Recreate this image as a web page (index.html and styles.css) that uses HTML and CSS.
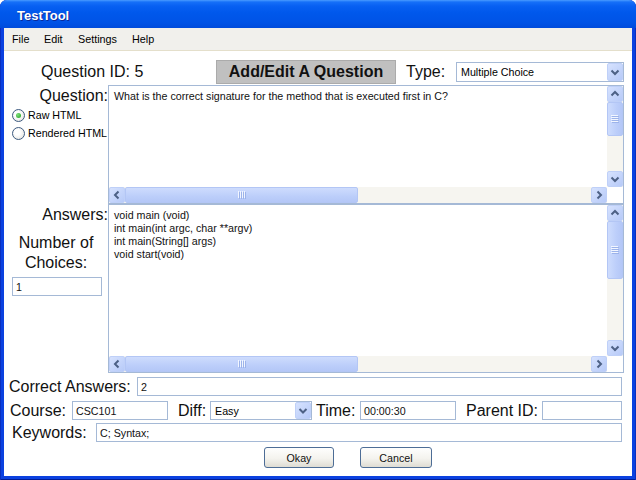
FILE: index.html
```html
<!DOCTYPE html>
<html>
<head>
<meta charset="utf-8">
<title>TestTool</title>
<link rel="stylesheet" href="styles.css">
</head>
<body>
<div class="window">
  <div class="titlebar"><span class="title">TestTool</span></div>
  <div class="frame">
    <div class="menubar">
      <span class="menu m-file">File</span>
      <span class="menu m-edit">Edit</span>
      <span class="menu m-settings">Settings</span>
      <span class="menu m-help">Help</span>
    </div>
    <div class="content">
      <div class="header">
        <div class="lbl qid">Question ID: 5</div>
        <div class="heading">Add/Edit A Question</div>
        <div class="lbl type-lbl">Type:</div>
        <div class="select type-select">
          <span class="val">Multiple Choice</span>
          <span class="dd"><svg width="14" height="16" viewBox="0 0 14 16"><path d="M3.5 6.5 L7 10 L10.5 6.5" fill="none" stroke="#4d6185" stroke-width="2"/></svg></span>
        </div>
      </div>

      <div class="main">
        <div class="side side-q">
          <div class="lbl side-lbl">Question:</div>
          <div class="radio"><span class="dot on"></span>Raw HTML</div>
          <div class="radio"><span class="dot"></span>Rendered HTML</div>
        </div>
        <div class="area area-q">
          <div class="text">What is the correct signature for the method that is executed first in C?</div>
          <div class="vscroll">
            <div class="sbtn"><svg width="14" height="14" viewBox="0 0 14 14"><path d="M3.5 8.5 L7 5 L10.5 8.5" fill="none" stroke="#4d6185" stroke-width="2"/></svg></div>
            <div class="vthumb q-vthumb"><svg width="8" height="8" viewBox="0 0 8 8"><path d="M0 0.5H7M0 2.5H7M0 4.5H7M0 6.5H7" stroke="#f2f6ff"/><path d="M1 1.5H8M1 3.5H8M1 5.5H8M1 7.5H8" stroke="#9cb3ea"/></svg></div>
            <div class="track"></div>
            <div class="sbtn"><svg width="14" height="14" viewBox="0 0 14 14"><path d="M3.5 5.5 L7 9 L10.5 5.5" fill="none" stroke="#4d6185" stroke-width="2"/></svg></div>
          </div>
          <div class="hscroll">
            <div class="sbtn"><svg width="14" height="14" viewBox="0 0 14 14"><path d="M8.5 3.5 L5 7 L8.5 10.5" fill="none" stroke="#4d6185" stroke-width="2"/></svg></div>
            <div class="hthumb"><svg width="8" height="8" viewBox="0 0 8 8"><path d="M0.5 0V7M2.5 0V7M4.5 0V7M6.5 0V7" stroke="#f2f6ff"/><path d="M1.5 1V8M3.5 1V8M5.5 1V8M7.5 1V8" stroke="#9cb3ea"/></svg></div>
            <div class="track"></div>
            <div class="sbtn"><svg width="14" height="14" viewBox="0 0 14 14"><path d="M5.5 3.5 L9 7 L5.5 10.5" fill="none" stroke="#4d6185" stroke-width="2"/></svg></div>
          </div>
          <div class="corner"></div>
        </div>

        <div class="side side-a">
          <div class="lbl side-lbl">Answers:</div>
          <div class="lbl choices">Number of<br>Choices:</div>
          <div class="field num">1</div>
        </div>
        <div class="area area-a">
          <div class="text">void main (void)<br>int main(int argc, char **argv)<br>int main(String[] args)<br>void start(void)</div>
          <div class="vscroll">
            <div class="sbtn"><svg width="14" height="14" viewBox="0 0 14 14"><path d="M3.5 8.5 L7 5 L10.5 8.5" fill="none" stroke="#4d6185" stroke-width="2"/></svg></div>
            <div class="vthumb a-vthumb"><svg width="8" height="8" viewBox="0 0 8 8"><path d="M0 0.5H7M0 2.5H7M0 4.5H7M0 6.5H7" stroke="#f2f6ff"/><path d="M1 1.5H8M1 3.5H8M1 5.5H8M1 7.5H8" stroke="#9cb3ea"/></svg></div>
            <div class="track"></div>
            <div class="sbtn"><svg width="14" height="14" viewBox="0 0 14 14"><path d="M3.5 5.5 L7 9 L10.5 5.5" fill="none" stroke="#4d6185" stroke-width="2"/></svg></div>
          </div>
          <div class="hscroll">
            <div class="sbtn"><svg width="14" height="14" viewBox="0 0 14 14"><path d="M8.5 3.5 L5 7 L8.5 10.5" fill="none" stroke="#4d6185" stroke-width="2"/></svg></div>
            <div class="hthumb"><svg width="8" height="8" viewBox="0 0 8 8"><path d="M0.5 0V7M2.5 0V7M4.5 0V7M6.5 0V7" stroke="#f2f6ff"/><path d="M1.5 1V8M3.5 1V8M5.5 1V8M7.5 1V8" stroke="#9cb3ea"/></svg></div>
            <div class="track"></div>
            <div class="sbtn"><svg width="14" height="14" viewBox="0 0 14 14"><path d="M5.5 3.5 L9 7 L5.5 10.5" fill="none" stroke="#4d6185" stroke-width="2"/></svg></div>
          </div>
          <div class="corner"></div>
        </div>
      </div>

      <div class="row row-correct">
        <div class="lbl l-correct">Correct Answers:</div>
        <div class="field grow">2</div>
      </div>
      <div class="row row-course">
        <div class="lbl l-course">Course:</div>
        <div class="field f-course">CSC101</div>
        <div class="lbl l-diff">Diff:</div>
        <div class="select diff-select">
          <span class="val">Easy</span>
          <span class="dd"><svg width="14" height="15" viewBox="0 0 14 15"><path d="M3.5 6 L7 9.5 L10.5 6" fill="none" stroke="#4d6185" stroke-width="2"/></svg></span>
        </div>
        <div class="lbl l-time">Time:</div>
        <div class="field f-time">00:00:30</div>
        <div class="lbl l-parent">Parent ID:</div>
        <div class="field grow"></div>
      </div>
      <div class="row row-keywords">
        <div class="lbl l-keywords">Keywords:</div>
        <div class="field grow">C; Syntax;</div>
      </div>
      <div class="buttons">
        <button class="btn okay">Okay</button>
        <button class="btn cancel">Cancel</button>
      </div>
    </div>
  </div>
</div>
</body>
</html>
```

FILE: styles.css
```css
* { box-sizing: border-box; }
html, body { margin: 0; padding: 0; background: #fff; }
body { font-family: "Liberation Sans", Arial, sans-serif; color: #000; }

.window {
  width: 636px;
  height: 480px;
  background: #0b41e0;
  border-radius: 7px 7px 0 0;
  display: flex;
  flex-direction: column;
  overflow: hidden;
  box-shadow: inset 1px 0 #0a2fbf, inset -1px 0 #0a2fbf, inset 0 -1px #001d96;
}

.titlebar {
  height: 28px;
  flex: none;
  display: flex;
  align-items: center;
  padding: 3px 0 0 17px;
  background: linear-gradient(to bottom, #4a9bff 0, #1670f8 2px, #0860f2 6px, #0058ec 45%, #0053e6 80%, #004bdc 100%);
}
.title {
  color: #fff;
  font-weight: bold;
  font-size: 13px;
  text-shadow: 1px 1px 0 #0b2a9a;
}

.frame {
  flex: 1;
  margin: 0 4px 4px 4px;
  background: #fff;
  display: flex;
  flex-direction: column;
}

.menubar {
  height: 23px;
  flex: none;
  background: #f1f0ec;
  border-bottom: 1px solid #e4dfcb;
  display: flex;
  align-items: center;
  padding-left: 8px;
  font-size: 10.8px;
}
.menu { display: inline-block; }
.m-file { width: 32px; }
.m-edit { width: 34px; }
.m-settings { width: 54px; }

.content { flex: 1; }

.lbl { font-size: 16px; color: #111; white-space: nowrap; }

.header {
  height: 24px;
  margin: 9px 0 1px 0;
  display: flex;
  align-items: center;
}
.qid { margin-left: 37px; width: 175px; }
.heading {
  width: 180px;
  height: 24px;
  background: #c0c0c0;
  border: 1px solid #ababab;
  font-size: 16px;
  font-weight: bold;
  color: #111;
  display: flex;
  align-items: center;
  justify-content: center;
}
.type-lbl { margin-left: 10px; width: 40px; }

.select {
  display: flex;
  align-items: center;
  border: 1px solid #a5b9d6;
  background: #fff;
  font-size: 10.7px;
}
.select .val { flex: 1; padding-left: 4px; }
.select .dd {
  width: 16px;
  align-self: stretch;
  display: flex;
  align-items: center;
  justify-content: center;
  border: 1px solid #bfd0f8;
  border-radius: 2px;
  background: linear-gradient(135deg, #d6e2fe, #b7caf8);
}
.type-select { margin-left: 10px; width: 168px; height: 20px; }
.diff-select { width: 102px; height: 19px; }

.main {
  display: grid;
  grid-template-columns: 104px 516px;
  grid-template-rows: 119px 169px;
}

.side { display: flex; flex-direction: column; }
.side-lbl { text-align: right; line-height: 18px; margin-top: 2px; }
.radio {
  height: 18px;
  display: flex;
  align-items: center;
  padding-left: 8px;
  font-size: 10.7px;
  white-space: nowrap;
}
.side-q .side-lbl + .radio { margin-top: 1px; }
.dot {
  width: 13px;
  height: 13px;
  border-radius: 50%;
  border: 1px solid #3d5a80;
  background: radial-gradient(circle at 40% 40%, #ffffff 30%, #dcdcd6 100%);
  margin-right: 3px;
  display: flex;
  align-items: center;
  justify-content: center;
  flex: none;
}
.dot.on::after {
  content: "";
  width: 5px;
  height: 5px;
  border-radius: 50%;
  background: radial-gradient(circle at 35% 35%, #7fe07a, #20a020);
}

.choices {
  text-align: center;
  line-height: 20px;
  margin-top: 9px;
}
.num { margin: 4px 0 0 8px; width: 90px; height: 18px; }

.area {
  border: 1px solid #a5b9d6;
  display: grid;
  grid-template-columns: 1fr 16px;
  grid-template-rows: 1fr 16px;
  background: #fff;
}
.text {
  padding: 4px 5px;
  font-size: 10.7px;
  line-height: 13px;
  color: #111;
}
.vscroll { display: flex; flex-direction: column; background: #f6f5f0; }
.hscroll { display: flex; background: #f6f5f0; }
.track { flex: 1; }
.corner { background: #fff; }
.sbtn {
  width: 16px;
  height: 16px;
  flex: none;
  border: 1px solid #bfd0f8;
  border-radius: 2px;
  background: linear-gradient(135deg, #d6e2fe, #b7caf8);
  display: flex;
  align-items: center;
  justify-content: center;
}
.vthumb {
  flex: none;
  border: 1px solid #b3c6f5;
  border-radius: 2px;
  background: linear-gradient(to right, #cedcfd, #bccefa 60%, #b4c7f7);
  display: flex;
  align-items: center;
  justify-content: center;
}
.q-vthumb { height: 34px; }
.a-vthumb { height: 58px; }
.hthumb {
  flex: none;
  width: 233px;
  border: 1px solid #b3c6f5;
  border-radius: 2px;
  background: linear-gradient(to bottom, #cedcfd, #bccefa 60%, #b4c7f7);
  display: flex;
  align-items: center;
  justify-content: center;
}

.field {
  height: 19px;
  border: 1px solid #a5b9d6;
  background: #fff;
  font-size: 10.7px;
  padding-left: 3px;
  display: flex;
  align-items: center;
  color: #111;
}
.grow { flex: 1; }

.row {
  display: flex;
  align-items: center;
  height: 19px;
  margin-right: 10px;
}
.row-correct { margin-top: 4px; }
.row-course { margin-top: 5px; }
.row-keywords { margin-top: 3px; }

.l-correct { margin-left: 5px; width: 128px; }
.l-course { margin-left: 6px; width: 62px; }
.f-course { width: 96px; }
.l-diff { margin-left: 10px; width: 32px; }
.l-time { margin-left: 4px; width: 44px; }
.f-time { width: 96px; }
.l-parent { margin-left: 10px; width: 76px; }
.l-keywords { margin-left: 8px; width: 84px; }

.buttons {
  display: flex;
  margin-top: 5px;
  height: 21px;
}
.btn {
  height: 21px;
  padding: 0;
  border: 1px solid #4d6d96;
  border-radius: 3px;
  background: linear-gradient(to bottom, #fefefd, #f4f3ee 55%, #dedcd3);
  font-family: "Liberation Sans", Arial, sans-serif;
  font-size: 10.7px;
  color: #111;
}
.okay { margin-left: 260px; width: 70px; }
.cancel { margin-left: 26px; width: 72px; }
```
